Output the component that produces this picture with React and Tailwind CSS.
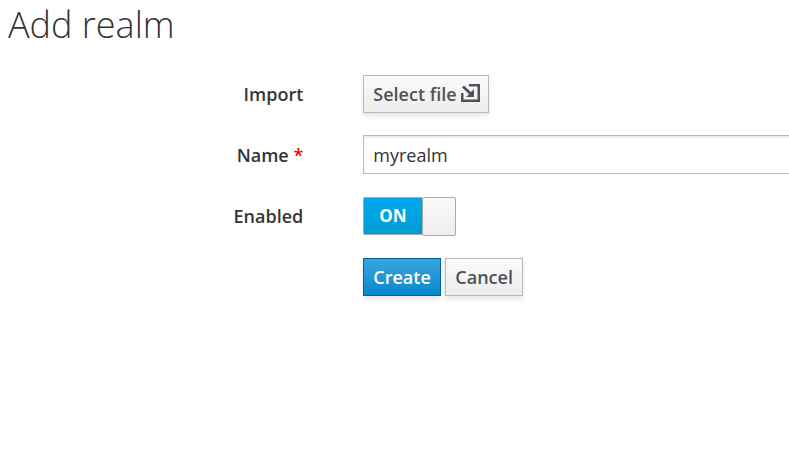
const button =
  "flex h-[38px] items-center border px-[9.3px] text-[18px] leading-[30px] font-semibold shadow-[0_3px_5px_rgba(3,3,3,0.1)] whitespace-nowrap";
const grayButton =
  "border-[#b7b7b7] bg-linear-to-b from-[#fafafa] to-[#ededed] text-[#4d5258]";

function Row({ label, required, children }) {
  return (
    <div className="flex h-[39px] items-start">
      <div className="w-[303.3px] shrink-0 pt-[4px] text-right text-[18px] leading-[30px] font-semibold text-[#363636]">
        {label}
        {required && <span className="text-[#ff0000]"> *</span>}
      </div>
      <div className="ml-[59.7px] flex min-w-0 grow">{children}</div>
    </div>
  );
}

function ImportIcon() {
  return (
    <svg width="19" height="18" viewBox="0 0 19 18" className="-mt-[2px] ml-[4px] shrink-0" fill="none" stroke="#4d5258">
      <path d="M8 1.25H17.75V16.75H1.25V9" strokeWidth="2.5" />
      <path d="M2 2.5L10.5 10.5" strokeWidth="2.8" />
      <path d="M13 5V13H5L7.6 10.6L10.6 7.6Z" fill="#4d5258" stroke="none" />
    </svg>
  );
}

export default function App() {
  return (
    <div className="h-[462px] w-full overflow-hidden bg-white font-['Open_Sans',sans-serif]">
      <h1 className="ml-[8px] pt-[5px] text-[36px] leading-[40px] font-light text-[#333333]">Add realm</h1>
      <form className="mt-[30px] flex flex-col gap-[22px]">
        <Row label="Import">
          <button type="button" className={`${button} ${grayButton} w-[126px]`}>
            Select file
            <ImportIcon />
          </button>
        </Row>
        <Row label="Name" required>
          <input
            type="text"
            defaultValue="myrealm"
            className="-mt-px -mr-[10px] h-[39px] min-w-0 grow border border-[#bababa] bg-white px-[9.3px] pt-px text-[18px] text-[#333333] shadow-[inset_0_2px_2px_rgba(3,3,3,0.075)] outline-none"
          />
        </Row>
        <Row label="Enabled">
          <div className="flex h-[39px] w-[93px]">
            <div className="flex h-[38px] w-[59px] items-center justify-center rounded-l-[2px] border border-r-0 border-[#aaaaaa] bg-linear-to-b from-[#00a9ec] to-[#009bd3] text-[17px] font-bold text-white">
              ON
            </div>
            <div className="h-[39px] w-[34px] rounded-[2px] border border-[#aaaaaa] bg-linear-to-b from-[#fafafa] to-[#ededed]" />
          </div>
        </Row>
        <div className="ml-[363px] flex gap-[4px]">
          <button type="button" className={`${button} w-[78px] border-[#00659c] bg-linear-to-b from-[#39a5dc] to-[#0088ce] text-white`}>
            Create
          </button>
          <button type="button" className={`${button} ${grayButton} w-[78px]`}>
            Cancel
          </button>
        </div>
      </form>
    </div>
  );
}
